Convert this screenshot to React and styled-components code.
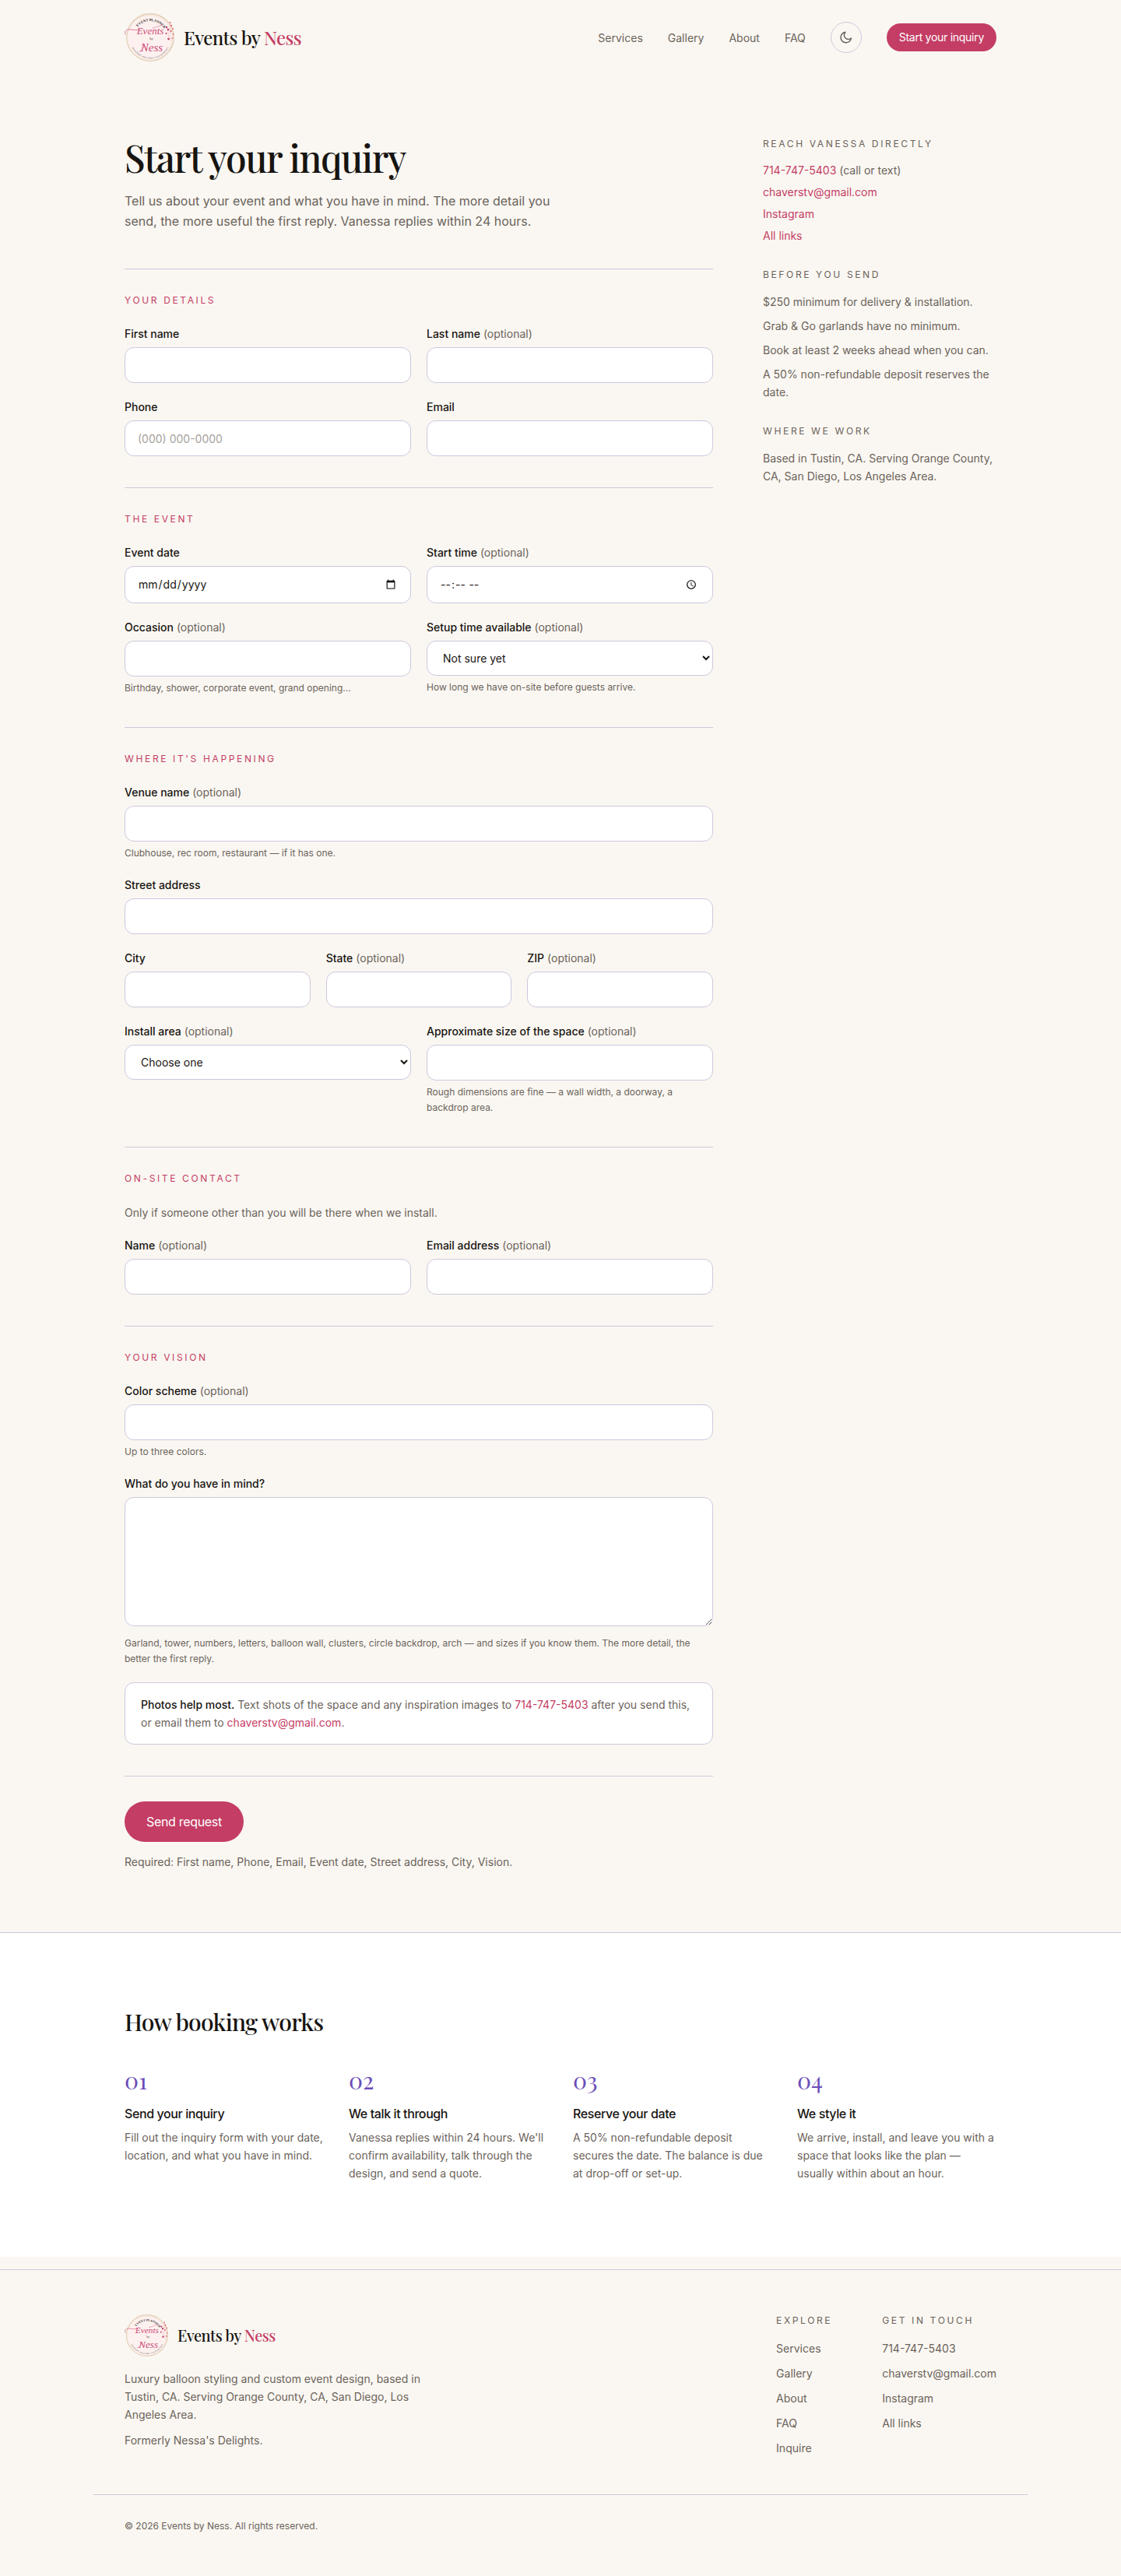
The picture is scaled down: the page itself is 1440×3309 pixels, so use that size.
import React from "react";
import styled, { createGlobalStyle, css } from "styled-components";

const color = {
  paper: "#faf7f2",
  card: "#ffffff",
  ink: "#171411",
  muted: "#6b635b",
  line: "#cdc7dd",
  rose: "#c43d64",
  violet: "#6a4db8",
};
const sans = `Inter, "Liberation Sans", sans-serif`;
const serif = `"Playfair Display", "Liberation Serif", serif`;

const GlobalStyle = createGlobalStyle`
  *, *::before, *::after { box-sizing: border-box; }
  body {
    margin: 0;
    background: ${color.paper};
    color: ${color.ink};
    font-family: ${sans};
    font-size: 14px;
    line-height: 23px;
  }
  h1, h2, h3, p, ul { margin: 0; padding: 0; }
  ul { list-style: none; }
  a { color: inherit; text-decoration: none; }
  input, select, textarea, button { font-family: inherit; }
`;

const Container = styled.div`
  width: 100%;
  max-width: 1200px;
  margin: 0 auto;
  padding: 0 40px;
`;

const display = css`
  font-family: ${serif};
  font-weight: 500;
  letter-spacing: -0.025em;
`;

/* Header */
const HeaderBar = styled(Container).attrs({ as: "header" })`
  display: flex;
  align-items: center;
  justify-content: space-between;
  padding-top: 16px;
  padding-bottom: 16px;
`;
const BrandLink = styled.a`
  display: inline-flex;
  align-items: center;
  gap: 12px;
`;
const Wordmark = styled.span`
  ${display}
  font-size: ${(p) => (p.$small ? 20 : 24)}px;
  line-height: 32px;
  color: ${color.ink};
  span { color: ${color.rose}; }
`;
const Nav = styled.nav`
  display: flex;
  align-items: center;
  gap: 32px;
  color: ${color.muted};
`;
const ThemeToggle = styled.button`
  display: grid;
  place-items: center;
  width: 40px;
  height: 40px;
  padding: 0;
  border: 1px solid ${color.line};
  border-radius: 50%;
  background: transparent;
  color: ${color.muted};
`;
const NavCta = styled.a`
  padding: 7px 16px;
  border-radius: 18px;
  background: ${color.rose};
  color: #fff;
  letter-spacing: -0.02em;
  line-height: 22px;
`;

/* Page columns */
const Columns = styled(Container).attrs({ as: "main" })`
  display: grid;
  grid-template-columns: minmax(0, 1fr) 300px;
  gap: 64px;
  padding-top: 80px;
  padding-bottom: 79px;
`;
const Title = styled.h1`
  ${display}
  margin-bottom: 16px;
  font-size: 48px;
  letter-spacing: -0.03em;
  line-height: 53px;
`;
const Lead = styled.p`
  max-width: 560px;
  margin-bottom: 48px;
  color: ${color.muted};
  font-size: 16px;
  line-height: 26px;
`;

/* Form */
const Section = styled.section`
  display: flex;
  flex-direction: column;
  gap: 20px;
  padding: 32px 0 40px;
  border-top: 1px solid ${color.line};
`;
const eyebrow = css`
  font-size: 12px;
  font-weight: 400;
  letter-spacing: 0.22em;
  text-transform: uppercase;
`;
const Legend = styled.h2`
  ${eyebrow}
  margin-bottom: 4px;
  color: ${color.rose};
  line-height: 16px;
`;
const Row = styled.div`
  display: grid;
  grid-template-columns: repeat(${(p) => p.$cols || 1}, minmax(0, 1fr));
  gap: 20px;
`;
const FieldBox = styled.div`
  display: flex;
  flex-direction: column;
`;
const Label = styled.label`
  margin-bottom: 6px;
  font-weight: 500;
  line-height: 22px;
`;
const Optional = styled.span`
  color: ${color.muted};
  font-weight: 400;
`;
const control = css`
  width: 100%;
  padding: 12px 16px;
  border: 1px solid ${color.line};
  border-radius: 12px;
  background: ${color.card};
  color: ${color.ink};
  font-size: 14px;
  line-height: 20px;
  &::placeholder { color: #a5a19c; }
`;
const Input = styled.input`
  ${control}
  height: ${(p) => (p.type === "date" || p.type === "time" ? 48 : 46)}px;
`;
const Select = styled.select`
  ${control}
  height: 45px;
`;
const TextArea = styled.textarea`
  ${control}
  display: block;
  height: 166px;
  margin-bottom: 7px;
  resize: vertical;
`;
const Hint = styled.p`
  margin-top: 5px;
  color: ${color.muted};
  font-size: 12px;
  line-height: 20px;
`;
const Note = styled.p`
  color: ${color.muted};
`;
const Callout = styled.p`
  padding: 16px 20px;
  border: 1px solid ${color.line};
  border-radius: 12px;
  background: ${color.card};
  color: ${color.muted};
  strong { color: ${color.ink}; font-weight: 500; }
  a { color: ${color.rose}; }
`;
const Submit = styled.div`
  display: flex;
  flex-direction: column;
  align-items: flex-start;
  gap: 14px;
  padding-top: 32px;
  border-top: 1px solid ${color.line};
`;
const SendButton = styled.button`
  padding: 14px 28px;
  border: 0;
  border-radius: 26px;
  background: ${color.rose};
  color: #fff;
  font-size: 16px;
  letter-spacing: -0.02em;
  line-height: 24px;
`;

/* Sidebar */
const Aside = styled.aside`
  display: flex;
  flex-direction: column;
  gap: 30px;
  color: ${color.muted};
`;
const SideHeading = styled.h2`
  ${eyebrow}
  margin-bottom: 14px;
  color: ${color.muted};
  line-height: 18px;
`;
const LinkList = styled.ul`
  display: flex;
  flex-direction: column;
  gap: ${(p) => p.$gap || 6}px;
  line-height: 22px;
  a { color: ${(p) => (p.$plain ? "inherit" : color.rose)}; }
`;
const FactList = styled.ul`
  display: flex;
  flex-direction: column;
  gap: 8px;
`;

/* Booking steps */
const Band = styled.section`
  padding: 96px 0;
  border-top: 1px solid ${color.line};
  background: ${color.card};
`;
const BandTitle = styled.h2`
  ${display}
  margin-bottom: 40px;
  font-size: 30px;
  line-height: 37px;
`;
const Steps = styled.div`
  display: grid;
  grid-template-columns: repeat(4, minmax(0, 1fr));
  gap: 32px;
`;
const StepNumber = styled.div`
  margin-bottom: 16px;
  color: ${color.violet};
  font-family: ${serif};
  font-size: 30px;
  line-height: 32px;
`;
const StepTitle = styled.h3`
  margin-bottom: 8px;
  font-size: 16px;
  font-weight: 500;
  letter-spacing: -0.025em;
  line-height: 22px;
`;

/* Footer */
const FooterBar = styled.footer`
  margin-top: 16px;
  padding: 56px 0;
  border-top: 1px solid ${color.line};
  color: ${color.muted};
`;
const FooterTop = styled(Container)`
  display: flex;
  justify-content: space-between;
  padding-bottom: 48px;
`;
const About = styled.div`
  display: flex;
  flex-direction: column;
  align-items: flex-start;
  gap: 10px;
  max-width: 400px;
  ${BrandLink} { margin-bottom: 6px; }
`;
const FooterLinks = styled.div`
  display: flex;
  gap: 64px;
  ${SideHeading} { margin-bottom: 16px; }
`;
const Legal = styled(Container)`
  padding-top: 32px;
  border-top: 1px solid ${color.line};
  font-size: 12px;
  line-height: 16px;
`;

function Seal({ size, id }) {
  return (
    <svg width={size} height={size} viewBox="0 0 64 64" aria-hidden="true">
      <defs>
        <path id={`${id}-top`} d="M12 32a21 21 0 0 1 42 0" />
        <path id={`${id}-bottom`} d="M6.500 33a26.500 26.500 0 0 0 53 0" />
      </defs>
      <circle cx="33" cy="32" r="29.500" fill="#fdf1ef" />
      <circle cx="33" cy="32" r="30.200" fill="none" stroke="#e3cdb6" strokeWidth="1.400" />
      <circle cx="32.500" cy="32.500" r="29" fill="none" stroke="#f1e4d4" strokeWidth="1" />
      <text fill="#3b2f31" fontFamily="Liberation Serif, serif" fontSize="4.600" fontWeight="700">
        <textPath href={`#${id}-top`} startOffset="52%" textAnchor="middle">EVENT PLANNER</textPath>
      </text>
      <text fill="#6f5f60" fontFamily="Liberation Sans, sans-serif" fontSize="2.600">
        <textPath href={`#${id}-bottom`} startOffset="50%" textAnchor="middle">
          BACKDROPS • BALLOONS • CUSTOM EVENTS
        </textPath>
      </text>
      <g fill="none" stroke="#d0527c" strokeLinecap="round">
        <path d="M1 28C-1 23 4 21 9 22c6 1 9 1 12-2" strokeWidth="0.700" />
        <path d="M19 50c3 0 5-3 6-8" strokeWidth="0.700" />
        <path d="M36 20c4-1 8-2 12-4" strokeWidth="0.500" />
      </g>
      <g fill="#cc4a77" fontFamily="Liberation Serif, serif" fontStyle="italic" textAnchor="middle">
        <text x="33" y="28" fontSize="13">Events</text>
        <text x="35" y="50" fontSize="15">Ness</text>
      </g>
      <text x="34.500" y="35" fill="#4a3c3e" fontFamily="Liberation Serif, serif" fontSize="4.500" textAnchor="middle">by</text>
      <g fill="none" stroke="#e7a3a8" strokeWidth="0.400">
        <path d="M59 15c-1 8-1 14 0 22M54 19c2 5 3 10 3 17" />
      </g>
      <g fill="#e2777f">
        <circle cx="58.500" cy="13" r="1.100" />
        <circle cx="60" cy="17" r="1.200" />
        <circle cx="62" cy="21" r="1.100" />
        <circle cx="59.500" cy="24" r="1.200" />
        <circle cx="62.500" cy="28" r="1" />
        <circle cx="61.500" cy="33" r="1.100" />
      </g>
      <g fill="#c23a68">
        <circle cx="54" cy="19" r="1.200" />
        <circle cx="56" cy="22" r="1.300" />
        <circle cx="53.500" cy="27" r="1.100" />
        <circle cx="56.500" cy="34" r="1.300" />
      </g>
    </svg>
  );
}

function Brand({ size, id, small }) {
  return (
    <BrandLink href="#">
      <Seal size={size} id={id} />
      <Wordmark $small={small}>Events by <span>Ness</span></Wordmark>
    </BrandLink>
  );
}

function Field({ id, label, optional, hint, as, children, ...rest }) {
  const Control = as || Input;
  return (
    <FieldBox>
      <Label htmlFor={id}>
        {label}
        {optional && <Optional> (optional)</Optional>}
      </Label>
      <Control id={id} name={id} {...rest}>{children}</Control>
      {hint && <Hint>{hint}</Hint>}
    </FieldBox>
  );
}

const steps = [
  ["01", "Send your inquiry", "Fill out the inquiry form with your date, location, and what you have in mind."],
  ["02", "We talk it through", "Vanessa replies within 24 hours. We'll confirm availability, talk through the design, and send a quote."],
  ["03", "Reserve your date", "A 50% non-refundable deposit secures the date. The balance is due at drop-off or set-up."],
  ["04", "We style it", "We arrive, install, and leave you with a space that looks like the plan — usually within about an hour."],
];

export default function App() {
  return (
    <>
      <GlobalStyle />
      <HeaderBar>
        <Brand size={64} id="seal-head" />
        <Nav>
          <a href="#services">Services</a>
          <a href="#gallery">Gallery</a>
          <a href="#about">About</a>
          <a href="#faq">FAQ</a>
          <ThemeToggle type="button" aria-label="Switch to dark theme">
            <svg width="16" height="16" viewBox="0 0 16 16" fill="none" stroke="currentColor" strokeWidth="1.500" strokeLinejoin="round">
              <path d="M14.500 9A6.800 6.800 0 1 1 7 1.200a5.300 5.300 0 0 0 7.500 7.800z" />
            </svg>
          </ThemeToggle>
          <NavCta href="#inquiry">Start your inquiry</NavCta>
        </Nav>
      </HeaderBar>

      <Columns>
        <div>
          <Title>Start your inquiry</Title>
          <Lead>
            Tell us about your event and what you have in mind. The more detail you send, the more
            useful the first reply. Vanessa replies within 24 hours.
          </Lead>
          <form id="inquiry">
            <Section>
              <Legend>Your details</Legend>
              <Row $cols={2}>
                <Field id="first" label="First name" type="text" />
                <Field id="last" label="Last name" optional type="text" />
                <Field id="phone" label="Phone" type="tel" placeholder="(000) 000-0000" />
                <Field id="email" label="Email" type="email" />
              </Row>
            </Section>

            <Section>
              <Legend>The event</Legend>
              <Row $cols={2}>
                <Field id="date" label="Event date" type="date" />
                <Field id="time" label="Start time" optional type="time" />
                <Field id="occasion" label="Occasion" optional type="text" hint="Birthday, shower, corporate event, grand opening…" />
                <Field id="setup" label="Setup time available" optional as={Select} hint="How long we have on-site before guests arrive.">
                  <option>Not sure yet</option>
                </Field>
              </Row>
            </Section>

            <Section>
              <Legend>Where it's happening</Legend>
              <Field id="venue" label="Venue name" optional type="text" hint="Clubhouse, rec room, restaurant — if it has one." />
              <Field id="street" label="Street address" type="text" />
              <Row $cols={3}>
                <Field id="city" label="City" type="text" />
                <Field id="state" label="State" optional type="text" />
                <Field id="zip" label="ZIP" optional type="text" />
              </Row>
              <Row $cols={2}>
                <Field id="area" label="Install area" optional as={Select}>
                  <option>Choose one</option>
                </Field>
                <Field id="size" label="Approximate size of the space" optional type="text" hint="Rough dimensions are fine — a wall width, a doorway, a backdrop area." />
              </Row>
            </Section>

            <Section>
              <Legend>On-site contact</Legend>
              <Note>Only if someone other than you will be there when we install.</Note>
              <Row $cols={2}>
                <Field id="contact-name" label="Name" optional type="text" />
                <Field id="contact-email" label="Email address" optional type="email" />
              </Row>
            </Section>

            <Section>
              <Legend>Your vision</Legend>
              <Field id="colors" label="Color scheme" optional type="text" hint="Up to three colors." />
              <Field
                id="vision"
                label="What do you have in mind?"
                as={TextArea}
                hint="Garland, tower, numbers, letters, balloon wall, clusters, circle backdrop, arch — and sizes if you know them. The more detail, the better the first reply."
              />
              <Callout>
                <strong>Photos help most.</strong> Text shots of the space and any inspiration images to{" "}
                <a href="sms:7147475403">714-747-5403</a> after you send this, or email them to{" "}
                <a href="mailto:chaverstv@gmail.com">chaverstv@gmail.com</a>.
              </Callout>
            </Section>

            <Submit>
              <SendButton type="submit">Send request</SendButton>
              <Note>Required: First name, Phone, Email, Event date, Street address, City, Vision.</Note>
            </Submit>
          </form>
        </div>

        <Aside>
          <div>
            <SideHeading>Reach Vanessa directly</SideHeading>
            <LinkList>
              <li><a href="tel:7147475403">714-747-5403</a> (call or text)</li>
              <li><a href="mailto:chaverstv@gmail.com">chaverstv@gmail.com</a></li>
              <li><a href="#instagram">Instagram</a></li>
              <li><a href="#links">All links</a></li>
            </LinkList>
          </div>
          <div>
            <SideHeading>Before you send</SideHeading>
            <FactList>
              <li>$250 minimum for delivery &amp; installation.</li>
              <li>Grab &amp; Go garlands have no minimum.</li>
              <li>Book at least 2 weeks ahead when you can.</li>
              <li>A 50% non-refundable deposit reserves the date.</li>
            </FactList>
          </div>
          <div>
            <SideHeading>Where we work</SideHeading>
            <p>Based in Tustin, CA. Serving Orange County, CA, San Diego, Los Angeles Area.</p>
          </div>
        </Aside>
      </Columns>

      <Band>
        <Container>
          <BandTitle>How booking works</BandTitle>
          <Steps>
            {steps.map(([number, title, text]) => (
              <div key={number}>
                <StepNumber>{number}</StepNumber>
                <StepTitle>{title}</StepTitle>
                <Note>{text}</Note>
              </div>
            ))}
          </Steps>
        </Container>
      </Band>

      <FooterBar>
        <FooterTop>
          <About>
            <Brand size={56} id="seal-foot" small />
            <p>
              Luxury balloon styling and custom event design, based in Tustin, CA. Serving Orange
              County, CA, San Diego, Los Angeles Area.
            </p>
            <p>Formerly Nessa's Delights.</p>
          </About>
          <FooterLinks>
            <div>
              <SideHeading>Explore</SideHeading>
              <LinkList $plain $gap={10}>
                <li><a href="#services">Services</a></li>
                <li><a href="#gallery">Gallery</a></li>
                <li><a href="#about">About</a></li>
                <li><a href="#faq">FAQ</a></li>
                <li><a href="#inquiry">Inquire</a></li>
              </LinkList>
            </div>
            <div>
              <SideHeading>Get in touch</SideHeading>
              <LinkList $plain $gap={10}>
                <li><a href="tel:7147475403">714-747-5403</a></li>
                <li><a href="mailto:chaverstv@gmail.com">chaverstv@gmail.com</a></li>
                <li><a href="#instagram">Instagram</a></li>
                <li><a href="#links">All links</a></li>
              </LinkList>
            </div>
          </FooterLinks>
        </FooterTop>
        <Legal>© 2026 Events by Ness. All rights reserved.</Legal>
      </FooterBar>
    </>
  );
}
